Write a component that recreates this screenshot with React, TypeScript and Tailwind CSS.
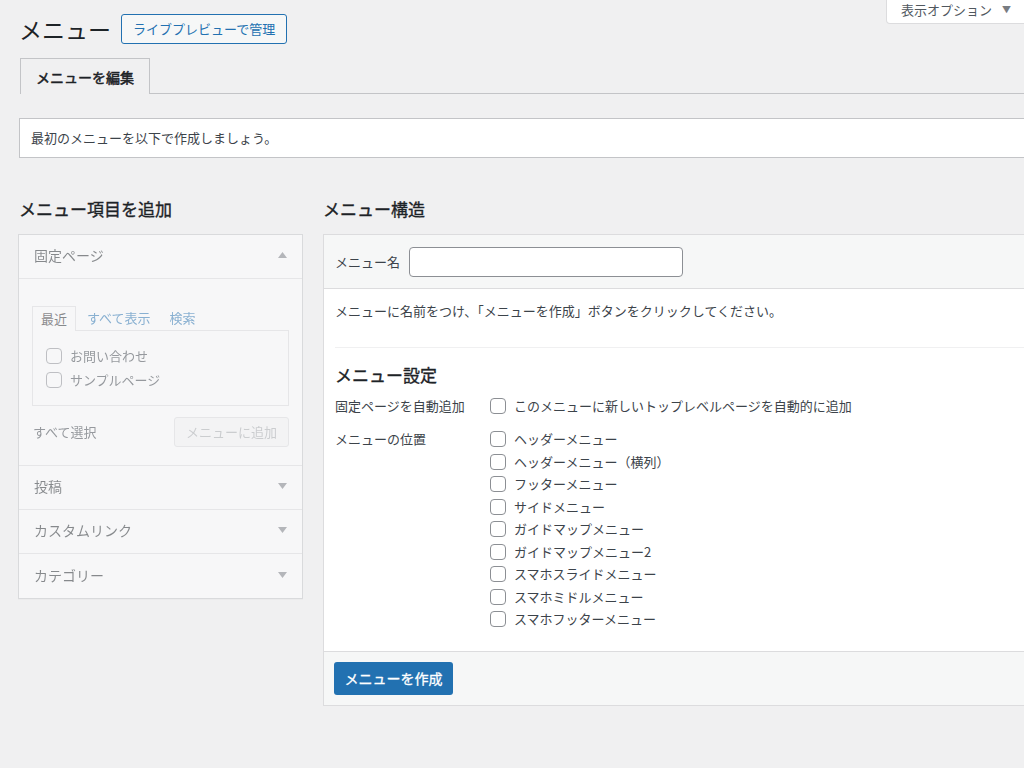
import React from "react";

const LOCATIONS = [
  "ヘッダーメニュー",
  "ヘッダーメニュー（横列）",
  "フッターメニュー",
  "サイドメニュー",
  "ガイドマップメニュー",
  "ガイドマップメニュー2",
  "スマホスライドメニュー",
  "スマホミドルメニュー",
  "スマホフッターメニュー",
];

function Box() {
  return <span className="inline-block w-4 h-4 shrink-0 rounded-[4px] border border-[#8c8f94] bg-white" />;
}

function Caret({ up }: { up?: boolean }) {
  return (
    <svg width="9" height="6" viewBox="0 0 9 6" className="shrink-0">
      {up ? <path d="M4.5 0 L9 6 L0 6 Z" fill="#787c82" /> : <path d="M0 0 L9 0 L4.5 6 Z" fill="#787c82" />}
    </svg>
  );
}

function Section({ title, last }: { title: string; last?: boolean }) {
  return (
    <div
      className={
        "h-[44px] flex items-center justify-between pl-[15px] pr-[15px] pb-[3px] text-[14px] text-[#1d2327] " +
        (last ? "" : "border-b border-[#dcdcde]")
      }
    >
      <span>{title}</span>
      <Caret />
    </div>
  );
}

export default function App() {
  return (
    <div className="w-[1024px] h-[768px] overflow-hidden bg-[#f0f0f1] text-[#3c434a] font-['Noto_Sans_CJK_JP','Noto_Sans',sans-serif] text-[13px] leading-[20px]">
      {/* top row */}
      <div className="flex items-start">
        <div className="flex items-center gap-[10px] pl-[19px] pt-[14px]">
          <h1 className="text-[23px] leading-[30px] text-[#1d2327]">メニュー</h1>
          <button className="h-[30px] px-[11px] border border-[#2271b1] rounded-[3px] bg-[#f6f7f7] text-[#2271b1] text-[13px]">
            ライブプレビューで管理
          </button>
        </div>
        <div className="ml-auto -mr-[14px] h-[24px] w-[152px] bg-white border border-t-0 border-[#dcdcde] rounded-b-[4px] flex items-center pl-[14px] pb-[4px] text-[13px] text-[#50575e]">
          表示オプション
          <span className="ml-[10px] text-[9px] text-[#787c82]">▼</span>
        </div>
      </div>

      <div className="w-[1080px]">
        {/* tabs */}
        <div className="ml-[20px] mt-[14px] flex border-b border-[#c3c4c7]">
          <div className="h-[36px] px-[15px] border border-b-0 border-[#c3c4c7] bg-[#f0f0f1] -mb-px flex items-center text-[14px] text-[#1d2327] [-webkit-text-stroke:0.5px_#1d2327]">
            メニューを編集
          </div>
        </div>

        {/* notice */}
        <div className="ml-[19px] mt-[24px] h-[40px] bg-white border border-[#c3c4c7] flex items-center pl-[11px] text-[13px] text-[#3c434a]">
          最初のメニューを以下で作成しましょう。
        </div>

        {/* columns */}
        <div className="flex mt-[39px] pl-[18px]">
          {/* left */}
          <div className="w-[285px] shrink-0">
            <h2 className="pl-[1px] text-[17px] leading-[24px] text-[#1d2327] [-webkit-text-stroke:0.35px_#1d2327] mb-[13px]">
              メニュー項目を追加
            </h2>
            <div className="border border-[#c3c4c7] bg-white opacity-50 shadow-[0_1px_1px_rgba(0,0,0,0.04)]">
              <div className="h-[44px] flex items-center justify-between pl-[15px] pr-[15px] pb-[3px] border-b border-[#dcdcde] text-[14px] text-[#1d2327]">
                <span>固定ページ</span>
                <Caret up />
              </div>
              <div className="pt-[26px] px-[13px] pb-[18px] border-b border-[#dcdcde]">
                <div className="flex items-end">
                  <div className="h-[25px] px-[8px] border border-b-0 border-[#dcdcde] bg-white -mb-px relative flex items-center text-[13px] text-[#1d2327]">
                    最近
                  </div>
                  <span className="ml-[11px] h-[25px] flex items-center text-[#2271b1]">すべて表示</span>
                  <span className="ml-[19px] h-[25px] flex items-center text-[#2271b1]">検索</span>
                </div>
                <div className="h-[76px] border border-[#dcdcde] pt-[17px] pl-[13px] flex flex-col gap-[8px]">
                  <div className="flex items-center gap-[8px] h-4">
                    <Box />
                    <span>お問い合わせ</span>
                  </div>
                  <div className="flex items-center gap-[8px] h-4">
                    <Box />
                    <span>サンプルページ</span>
                  </div>
                </div>
                <div className="mt-[11px] flex items-center justify-between">
                  <span className="pl-[1px]">すべて選択</span>
                  <button className="h-[30px] w-[115px] border border-[#dcdcde] rounded-[3px] bg-[#f6f7f7] text-[#a7aaad] text-[13px]">
                    メニューに追加
                  </button>
                </div>
              </div>
              <Section title="投稿" />
              <Section title="カスタムリンク" />
              <Section title="カテゴリー" last />
            </div>
          </div>

          {/* right */}
          <div className="ml-[20px] w-[760px] shrink-0">
            <h2 className="text-[17px] leading-[24px] text-[#1d2327] [-webkit-text-stroke:0.35px_#1d2327] mb-[13px]">
              メニュー構造
            </h2>
            <div className="border border-[#dcdcde] bg-white">
              <div className="h-[54px] bg-[#f6f7f7] border-b border-[#dcdcde] flex items-center pl-[11px]">
                <span className="text-[13px]">メニュー名</span>
                <div className="ml-[9px] w-[274px] h-[30px] border border-[#8c8f94] rounded-[4px] bg-white" />
              </div>
              <div className="pl-[11px] pb-[20px]">
                <p className="pt-[12px] leading-[20px]">メニューに名前をつけ、「メニューを作成」ボタンをクリックしてください。</p>
                <div className="mt-[26px] border-t border-[#f0f0f1]" />
                <h3 className="mt-[15px] text-[17px] leading-[24px] text-[#1d2327] [-webkit-text-stroke:0.35px_#1d2327]">
                  メニュー設定
                </h3>
                <div className="mt-[8px] flex">
                  <div className="w-[155px] leading-[22px]">固定ページを自動追加</div>
                  <div className="flex items-center gap-[8px] h-[22px]">
                    <Box />
                    <span>このメニューに新しいトップレベルページを自動的に追加</span>
                  </div>
                </div>
                <div className="mt-[11px] flex">
                  <div className="w-[155px] leading-[22.5px]">メニューの位置</div>
                  <div className="flex flex-col">
                    {LOCATIONS.map((l) => (
                      <div key={l} className="flex items-center gap-[8px] h-[22.5px]">
                        <Box />
                        <span>{l}</span>
                      </div>
                    ))}
                  </div>
                </div>
              </div>
              <div className="border-t border-[#dcdcde] bg-[#f6f7f7] p-[10px]">
                <button className="h-[33px] w-[119px] rounded-[3px] bg-[#2271b1] text-white text-[14px] [-webkit-text-stroke:0.3px_#ffffff]">
                  メニューを作成
                </button>
              </div>
            </div>
          </div>
        </div>
      </div>
    </div>
  );
}
